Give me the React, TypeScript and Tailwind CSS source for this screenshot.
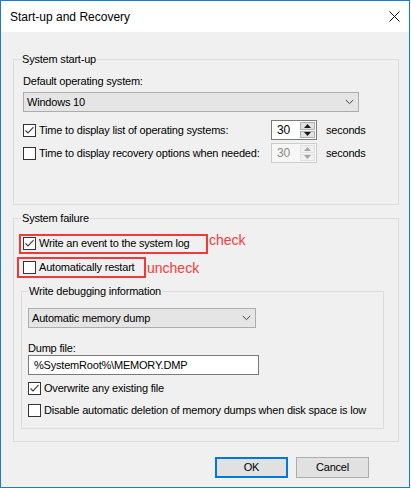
import React from "react";

function CB({ checked }: { checked?: boolean }) {
  return (
    <span className="w-[13px] h-[13px] border border-[#333333] bg-white flex items-center justify-center shrink-0">
      {checked && (
        <svg width="11" height="11" viewBox="0 0 11 11">
          <path d="M1.5 5.5 L4 8 L9.5 2.2" fill="none" stroke="#3c3c3c" strokeWidth="1.1" />
        </svg>
      )}
    </span>
  );
}

function Chevron() {
  return (
    <svg width="9" height="6" viewBox="0 0 9 6">
      <path d="M0.8 1 L4.5 4.6 L8.2 1" fill="none" stroke="#404040" strokeWidth="1" />
    </svg>
  );
}

function Select({ text, w }: { text: string; w: string }) {
  return (
    <div className={`h-[20px] ${w} border border-[#adadad] bg-[#e5e5e5] flex items-center justify-between pl-[3px] pr-[4px]`}>
      <span>{text}</span>
      <Chevron />
    </div>
  );
}

function Spin({ disabled }: { disabled?: boolean }) {
  const arrow = disabled ? "#a6a6a6" : "#1a1a1a";
  return (
    <div
      className={`flex h-[20px] w-[46px] border ${
        disabled ? "border-[#cccccc] bg-[#f7f7f7]" : "border-[#7a7a7a] bg-white"
      }`}
    >
      <div className={`flex-1 pl-[5px] flex items-center text-[12px] ${disabled ? "text-[#8a8a8a]" : "text-black"}`}>30</div>
      <div className="w-[17px] flex flex-col gap-[1px] p-[1px]">
        <div
          className={`flex-1 border flex items-center justify-center ${
            disabled ? "border-[#e0e0e0] bg-[#f0f0f0]" : "border-[#adadad] bg-[#e1e1e1]"
          }`}
        >
          <svg width="7" height="4" viewBox="0 0 7 4">
            <path d="M0 4 L3.5 0 L7 4 Z" fill={arrow} />
          </svg>
        </div>
        <div
          className={`flex-1 border flex items-center justify-center ${
            disabled ? "border-[#e0e0e0] bg-[#f0f0f0]" : "border-[#adadad] bg-[#e1e1e1]"
          }`}
        >
          <svg width="7" height="4" viewBox="0 0 7 4">
            <path d="M0 0 L7 0 L3.5 4 Z" fill={arrow} />
          </svg>
        </div>
      </div>
    </div>
  );
}

export default function App() {
  return (
    <div className="w-[411px] h-[489px] bg-white font-['Liberation_Sans',Arial,sans-serif] text-[11px] tracking-[-0.2px] text-black">
      <div className="w-[410px] h-[488px] border border-[#1a7ad4] flex flex-col">
        <div className="h-[31px] bg-white flex items-center justify-between pl-[9px] pr-[9px] shrink-0">
          <span className="text-[12px] tracking-normal">Start-up and Recovery</span>
          <svg width="11" height="11" viewBox="0 0 11 11">
            <path d="M0.5 0.5 L10.5 10.5 M10.5 0.5 L0.5 10.5" stroke="#111" strokeWidth="1" fill="none" />
          </svg>
        </div>
        <div className="flex-1 bg-[#f0f0f0] pt-[19px] flex flex-col">
          <fieldset className="border border-[#dcdcdc] ml-[12px] w-[386px] px-[9px] pb-[41px]">
            <legend className="ml-[-2px] px-[1px] leading-[16px]">System start-up</legend>
            <div className="mt-[7px] leading-[15px]">Default operating system:</div>
            <div className="mt-[3px]">
              <Select text="Windows 10" w="w-[336px]" />
            </div>
            <div className="mt-[8px] h-[20px] flex items-center">
              <CB checked />
              <span className="ml-[3px] w-[232px] whitespace-nowrap">Time to display list of operating systems:</span>
              <Spin />
              <span className="ml-[9px]">seconds</span>
            </div>
            <div className="mt-[3px] h-[20px] flex items-center">
              <CB />
              <span className="ml-[3px] w-[232px] whitespace-nowrap">Time to display recovery options when needed:</span>
              <Spin disabled />
              <span className="ml-[9px]">seconds</span>
            </div>
          </fieldset>

          <fieldset className="mt-[5px] border border-[#dcdcdc] ml-[12px] w-[386px] px-[9px] pb-[12px]">
            <legend className="ml-[-2px] px-[1px] leading-[16px]">System failure</legend>
            <div className="mt-[6px] flex items-center">
              <div className="ml-[-4px] w-[189px] h-[20px] border-2 border-[#f03a3a] pl-[2px] flex items-center whitespace-nowrap">
                <CB checked />
                <span className="ml-[3px]">Write an event to the system log</span>
              </div>
              <span className="ml-[1px] mb-[7px] text-[14px] tracking-normal text-[#f23c3c] leading-[16px]">check</span>
            </div>
            <div className="mt-[2px] flex items-center">
              <div className="ml-[-6px] w-[129px] h-[21px] border-2 border-[#f03a3a] pl-[4px] flex items-center whitespace-nowrap">
                <CB />
                <span className="ml-[3px]">Automatically restart</span>
              </div>
              <span className="ml-[1px] text-[14px] tracking-normal text-[#f23c3c] leading-[16px]">uncheck</span>
            </div>

            <fieldset className="mt-[5px] ml-[-2px] w-[363px] border border-[#dcdcdc] pl-[6px] pb-[8px]">
              <legend className="px-[1px] leading-[16px]">Write debugging information</legend>
              <div className="mt-[9px]">
                <Select text="Automatic memory dump" w="w-[228px]" />
              </div>
              <div className="mt-[13px] leading-[14px]">Dump file:</div>
              <div className="h-[20px] w-[231px] border border-[#7a7a7a] bg-white pl-[5px] flex items-center">
                %SystemRoot%\MEMORY.DMP
              </div>
              <div className="mt-[3px] h-[20px] flex items-center">
                <CB checked />
                <span className="ml-[3px]">Overwrite any existing file</span>
              </div>
              <div className="mt-[2px] h-[20px] flex items-center">
                <CB />
                <span className="ml-[3px] whitespace-nowrap">Disable automatic deletion of memory dumps when disk space is low</span>
              </div>
            </fieldset>
          </fieldset>

          <div className="mt-[15px] flex justify-end gap-[8px] pr-[40px]">
            <button className="w-[73px] h-[21px] border-2 border-[#0078d7] bg-[#e1e1e1] flex items-center justify-center">OK</button>
            <button className="w-[73px] h-[21px] border border-[#adadad] bg-[#e1e1e1] flex items-center justify-center">Cancel</button>
          </div>
        </div>
      </div>
    </div>
  );
}
